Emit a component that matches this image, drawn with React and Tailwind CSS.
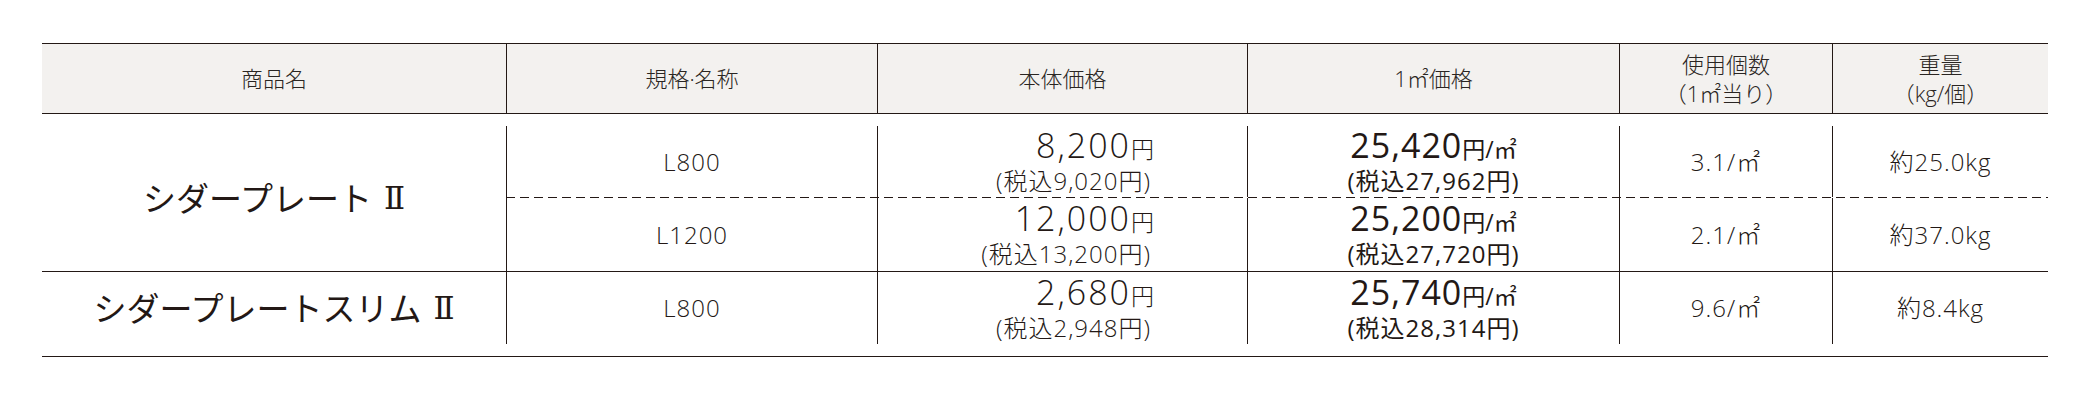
import React from 'react';

const rows = [
  {
    name: 'シダープレート',
    items: [
      { size: 'L800', price: '8,200', tax: '9,020', sqm: '25,420', sqmTax: '27,962', use: '3.1', weight: '約25.0kg' },
      { size: 'L1200', price: '12,000', tax: '13,200', sqm: '25,200', sqmTax: '27,720', use: '2.1', weight: '約37.0kg' },
    ],
  },
  {
    name: 'シダープレートスリム',
    items: [
      { size: 'L800', price: '2,680', tax: '2,948', sqm: '25,740', sqmTax: '28,314', use: '9.6', weight: '約8.4kg' },
    ],
  },
];

const ProductName = ({ name }) => (
  <div className="w-[464px] flex items-center justify-center text-[33px] leading-none text-[#231815]">
    <span>{name}</span>
    <span className="ml-[12px] font-['DejaVu_Serif',serif] text-[31px]">Ⅱ</span>
  </div>
);

const ItemRow = ({ item, height }) => (
  <div className={`grid grid-cols-[371px_370px_372px_213px_216px] ${height}`}>
    <div className="border-l border-[#231815] flex items-center justify-center font-light text-[24px] tracking-[1px]">
      {item.size}
    </div>
    <div className="border-l border-[#231815] flex flex-col items-end justify-center pr-[93px] font-light">
      <div className="leading-[32px]">
        <span className="text-[34px] tracking-[2px]">{item.price}</span>
        <span className="text-[23px]">円</span>
      </div>
      <div className="leading-[26px] text-[24px] tracking-[1px] pr-[3px]">(税込{item.tax}円)</div>
    </div>
    <div className="border-l border-[#231815] flex flex-col items-center justify-center">
      <div className="leading-[32px]">
        <span className="text-[34px] tracking-[1px]">{item.sqm}</span>
        <span className="text-[23px]">円/㎡</span>
      </div>
      <div className="leading-[26px] text-[24px] tracking-[1px]">(税込{item.sqmTax}円)</div>
    </div>
    <div className="border-l border-[#231815] flex items-center justify-center font-light text-[24px] tracking-[1px]">
      {item.use}/㎡
    </div>
    <div className="border-l border-[#231815] flex items-center justify-center font-light text-[24px] tracking-[1px]">
      {item.weight}
    </div>
  </div>
);

export default function App() {
  return (
    <div className="bg-white w-[2096px] h-[406px] pt-[43px] pl-[42px] font-['Open_Sans','Noto_Sans_CJK_JP',sans-serif] text-[#231815]">
      <div className="w-[2006px]">
        {/* header */}
        <div className="grid grid-cols-[464px_371px_370px_372px_213px_216px] h-[71px] border-y border-[#231815] bg-[#f3f1ef] font-light text-[22px] leading-[29px] text-[#2a2522] text-center">
          <div className="flex items-center justify-center">商品名</div>
          <div className="flex items-center justify-center border-l border-[#231815]">規格·名称</div>
          <div className="flex items-center justify-center border-l border-[#231815]">本体価格</div>
          <div className="flex items-center justify-center border-l border-[#231815]">1㎡価格</div>
          <div className="flex flex-col items-center justify-center border-l border-[#231815]">
            <span>使用個数</span>
            <span>（1㎡当り）</span>
          </div>
          <div className="flex flex-col items-center justify-center border-l border-[#231815]">
            <span>重量</span>
            <span>（kg/個）</span>
          </div>
        </div>

        {/* body */}
        <div className="pt-[12px] pb-[12px] border-b border-[#231815]">
          <div className="flex">
            <ProductName name={rows[0].name} />
            <div className="flex flex-col">
              <ItemRow item={rows[0].items[0]} height="h-[71px]" />
              <div className="h-px bg-[repeating-linear-gradient(90deg,#231815_0_9px,transparent_9px_14px)]" />
              <ItemRow item={rows[0].items[1]} height="h-[73px]" />
            </div>
          </div>
          <div className="flex border-t border-[#231815]">
            <ProductName name={rows[1].name} />
            <ItemRow item={rows[1].items[0]} height="h-[72px]" />
          </div>
        </div>
      </div>
    </div>
  );
}
